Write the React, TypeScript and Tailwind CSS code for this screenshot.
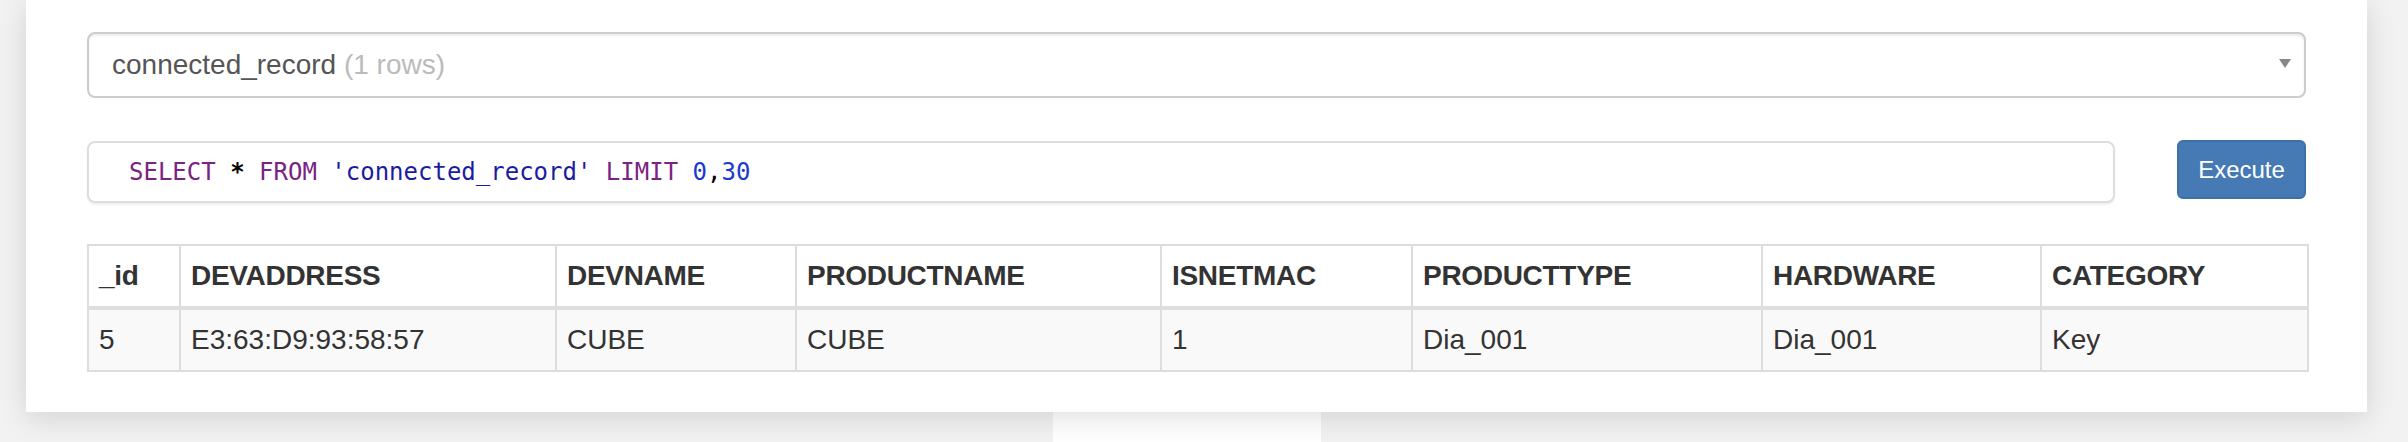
const columns = [
  { name: '_id', width: 92, value: '5' },
  { name: 'DEVADDRESS', width: 376, value: 'E3:63:D9:93:58:57' },
  { name: 'DEVNAME', width: 240, value: 'CUBE' },
  { name: 'PRODUCTNAME', width: 365, value: 'CUBE' },
  { name: 'ISNETMAC', width: 251, value: '1' },
  { name: 'PRODUCTTYPE', width: 350, value: 'Dia_001' },
  { name: 'HARDWARE', width: 279, value: 'Dia_001' },
  { name: 'CATEGORY', width: 267, value: 'Key' },
]

function TableSelect() {
  return (
    <div className="flex h-[66px] items-center rounded-[8px] border-2 border-[#ccc] bg-white pl-[23px] pr-[13px] text-[28px] text-[#555] shadow-[inset_0_2px_2px_rgba(0,0,0,0.075)]">
      <span>
        connected_record <span className="text-[#bbb]">(1 rows)</span>
      </span>
      <span className="-mt-[3px] ml-auto h-0 w-0 border-t-[9px] border-r-[6px] border-l-[6px] border-t-[#888] border-r-transparent border-l-transparent" />
    </div>
  )
}

function QueryBar() {
  return (
    <div className="mt-[42px] flex items-start">
      <div className="mt-[1px] flex h-[62px] flex-1 items-center rounded-[8px] border-2 border-[#ddd] bg-white pl-[40px] font-['DejaVu_Sans_Mono','Liberation_Mono',monospace] text-[24px] shadow-[0_2px_2px_rgba(0,0,0,0.06)]">
        <span className="text-[#7a2383]">SELECT</span>
        <span className="whitespace-pre font-bold text-black"> * </span>
        <span className="text-[#7a2383]">FROM</span>
        <span className="whitespace-pre"> </span>
        <span className="text-[#1c1ca0]">'connected_record'</span>
        <span className="whitespace-pre"> </span>
        <span className="text-[#7a2383]">LIMIT</span>
        <span className="whitespace-pre"> </span>
        <span className="text-[#1a3ad0]">0</span>
        <span className="text-black">,</span>
        <span className="text-[#1a3ad0]">30</span>
      </div>
      <button
        type="button"
        className="ml-[62px] h-[59px] w-[129px] rounded-[6px] border-2 border-[#3e70a8] bg-[#457ab4] text-[24px] text-white"
      >
        Execute
      </button>
    </div>
  )
}

function ResultTable() {
  return (
    <table className="mt-[41px] w-full table-fixed border-collapse text-[28px] leading-[40px] text-[#333]">
      <colgroup>
        {columns.map((col) => (
          <col key={col.name} style={{ width: col.width }} />
        ))}
      </colgroup>
      <thead>
        <tr>
          {columns.map((col) => (
            <th
              key={col.name}
              className="border-2 border-b-4 border-[#ddd] px-[10px] py-[10px] text-left font-bold tracking-[-0.3px]"
            >
              {col.name}
            </th>
          ))}
        </tr>
      </thead>
      <tbody>
        <tr className="bg-[#f9f9f9]">
          {columns.map((col) => (
            <td key={col.name} className="border-2 border-[#ddd] px-[10px] py-[10px]">
              {col.value}
            </td>
          ))}
        </tr>
      </tbody>
    </table>
  )
}

export default function App() {
  return (
    <div className="h-[442px] overflow-hidden bg-[#f2f2f2] font-['Liberation_Sans',Arial,sans-serif]">
      <div className="relative z-10 ml-[26px] w-[2341px] bg-white px-[61px] pt-[32px] pb-[40px] shadow-[0_6px_28px_rgba(0,0,0,0.13)]">
        <TableSelect />
        <QueryBar />
        <ResultTable />
      </div>
      <div className="ml-[1053px] h-[40px] w-[268px] bg-white" />
    </div>
  )
}
